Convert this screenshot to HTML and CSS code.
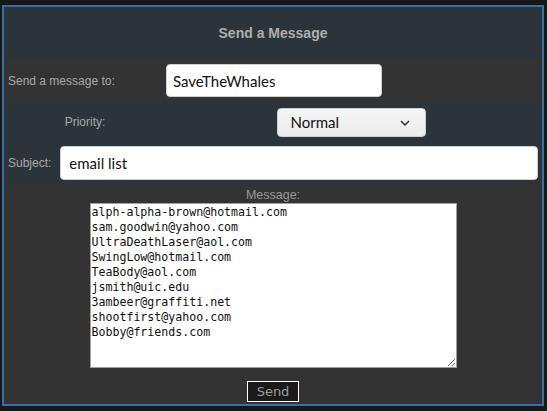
FILE: index.html
```html
<!DOCTYPE html>
<html>
<head>
<meta charset="utf-8">
<link rel="stylesheet" href="styles.css">
</head>
<body>
<div class="panel">
  <div class="header">Send a Message</div>
  <div class="row row-to">
    <label class="lbl">Send a message to:</label>
    <div class="cell"><input class="field to-field" type="text" value="SaveTheWhales"></div>
  </div>
  <div class="row row-priority">
    <label class="lbl lbl-center">Priority:</label>
    <div class="cell cell-center">
      <div class="select-wrap">
        <select class="select"><option>Normal</option></select>
        <svg class="chev" width="10" height="6" viewBox="0 0 10 6"><path d="M1 1 L5 5 L9 1" fill="none" stroke="#333" stroke-width="1.6"/></svg>
      </div>
    </div>
  </div>
  <div class="row-subject">
    <label class="lbl">Subject:</label>
    <input class="field subject-field" type="text" value="email list">
  </div>
  <div class="message">
    <label class="msg-lbl">Message:</label>
    <textarea class="msg-text">alph-alpha-brown@hotmail.com
sam.goodwin@yahoo.com
UltraDeathLaser@aol.com
SwingLow@hotmail.com
TeaBody@aol.com
jsmith@uic.edu
3ambeer@graffiti.net
shootfirst@yahoo.com
Bobby@friends.com</textarea>
    <button class="send">Send</button>
  </div>
</div>
</body>
</html>
```
FILE: styles.css
```css
html, body {
  margin: 0;
  padding: 0;
  background: #181818;
}
body {
  padding: 5px 3px 5px 2px;
  font-family: "Liberation Sans", Arial, sans-serif;
}
.panel {
  border: 2px solid #3a6ea5;
  background: #333333;
  display: flex;
  flex-direction: column;
  height: 397px;
}
.header {
  background: #2b343b;
  height: 52px;
  display: flex;
  align-items: center;
  justify-content: center;
  color: #aeaeae;
  font-weight: bold;
  font-size: 14px;
}
.row {
  display: grid;
  grid-template-columns: 162px 1fr;
  align-items: center;
}
.row-to {
  background: #333333;
  height: 43px;
}
.row-priority {
  background: #2b343b;
  height: 40px;
}
.lbl {
  color: #a9a9a9;
  font-size: 12px;
  padding-left: 4px;
}
.lbl-center {
  text-align: center;
  padding-left: 0;
}
.cell-center {
  display: flex;
  justify-content: center;
  padding-right: 6px;
}
.field {
  box-sizing: border-box;
  border: 1px solid #cfcfcf;
  border-radius: 4px;
  background: #ffffff;
  font-family: Lato, "Open Sans", sans-serif;
  font-size: 15px;
  color: #111;
  padding: 0 0 0 6px;
  margin: 0;
  outline: none;
}
.to-field {
  width: 216px;
  height: 33px;
}
.select-wrap {
  position: relative;
  width: 149px;
  height: 29px;
}
.select {
  appearance: none;
  -webkit-appearance: none;
  box-sizing: border-box;
  width: 149px;
  height: 29px;
  border: 1px solid #cfcfcf;
  border-radius: 4px;
  background: linear-gradient(#f6f6f6, #ebebeb);
  font-family: Lato, "Open Sans", sans-serif;
  font-size: 15px;
  color: #111;
  padding: 0 0 0 13px;
  margin: 0;
}
.chev {
  position: absolute;
  right: 16px;
  top: 12px;
}
.row-subject {
  background: #2b343b;
  height: 41px;
  display: flex;
  align-items: center;
  gap: 9px;
  padding-right: 4px;
}
.subject-field {
  flex: 1;
  height: 34px;
  padding-left: 8px;
  margin-top: 1px;
}
.message {
  flex: 1;
  display: flex;
  flex-direction: column;
  align-items: center;
}
.msg-lbl {
  color: #9a9a9a;
  font-size: 12.5px;
  margin-top: 5px;
  height: 15px;
  line-height: 14px;
}
.msg-text {
  box-sizing: border-box;
  width: 367px;
  height: 165px;
  margin: 0;
  padding: 1px 1px;
  border: 1px solid #a0a0a0;
  background: #fff;
  font-family: "DejaVu Sans Mono", monospace;
  font-size: 11.6px;
  line-height: 15px;
  color: #111;
  outline: none;
}
.send {
  margin-top: 13px;
  width: 52px;
  height: 21px;
  box-sizing: border-box;
  background: #1a1a1a;
  border: 1px solid #ffffff;
  color: #9a9a9a;
  font-family: "DejaVu Sans", sans-serif;
  font-size: 13px;
  padding: 0;
}
```
